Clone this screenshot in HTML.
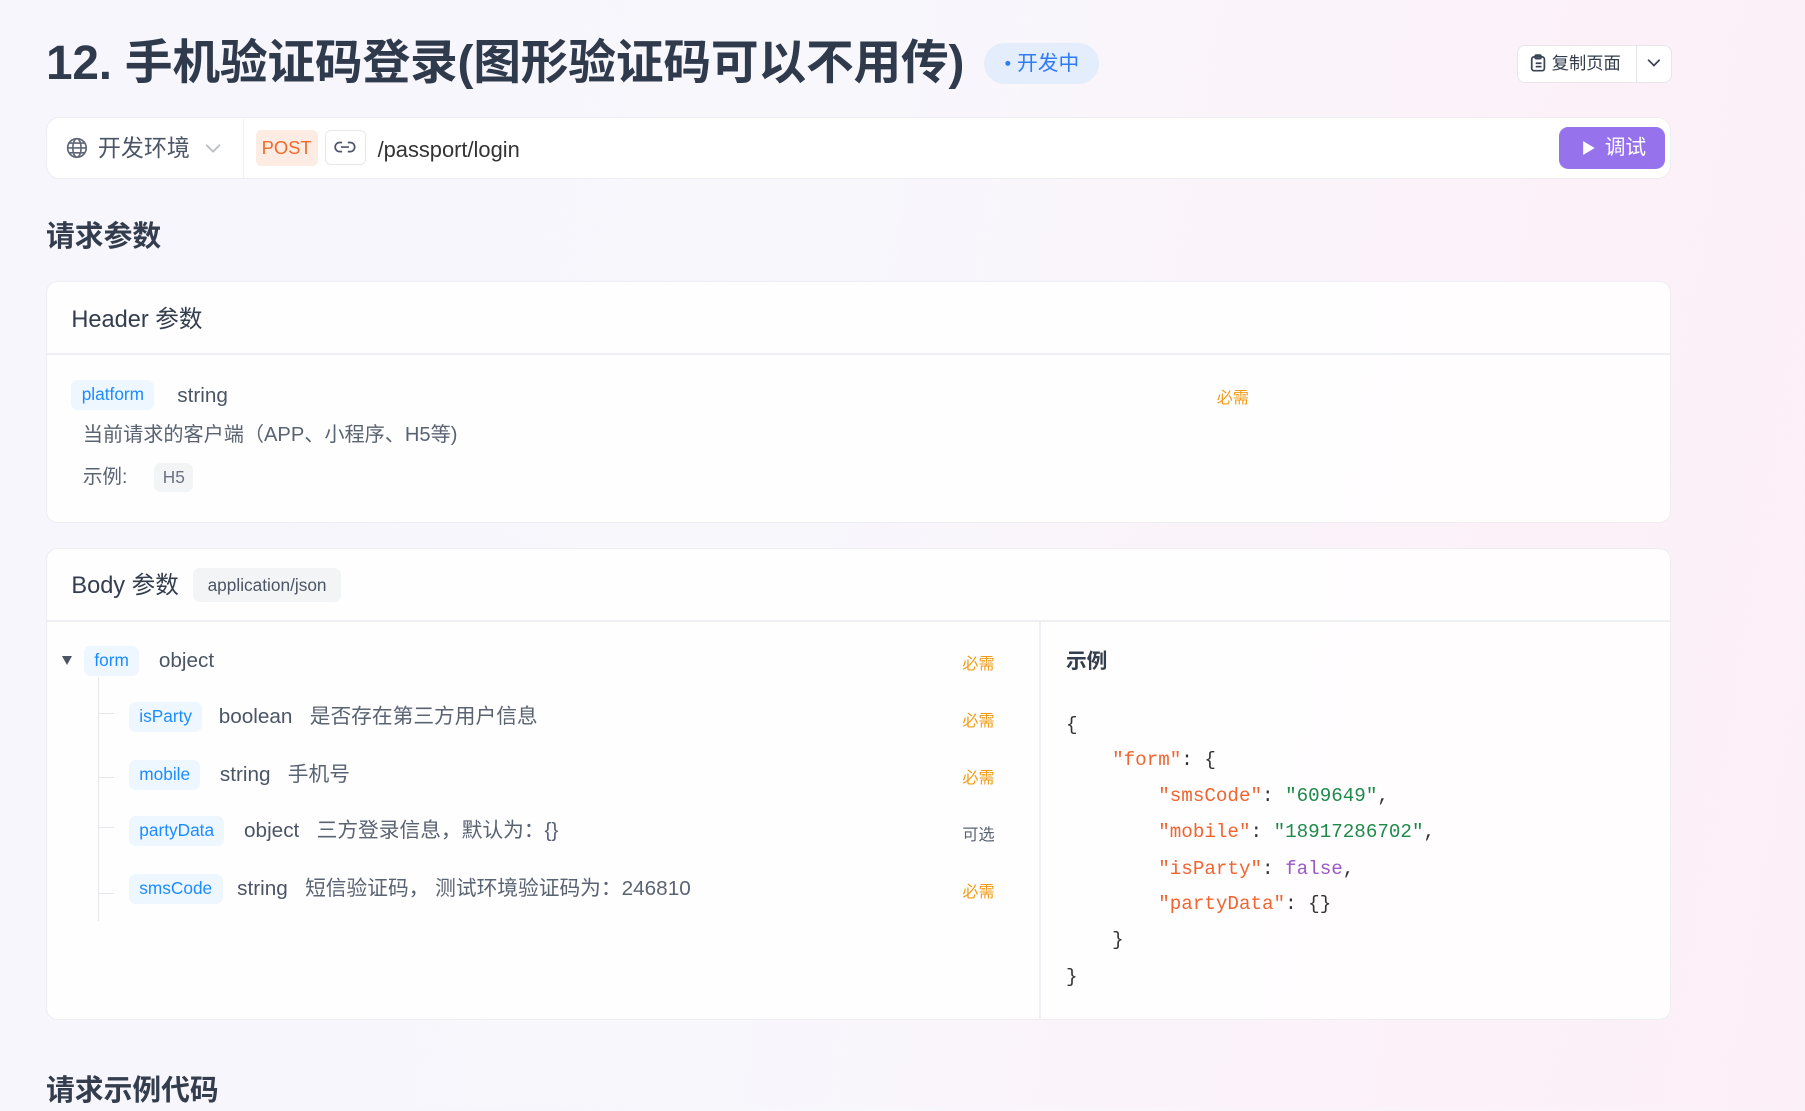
<!DOCTYPE html>
<html><head><meta charset="utf-8"><style>
html{zoom:1.15115}
body{margin:0;width:1568px;height:961px;overflow:hidden;font-family:"Liberation Sans","Noto Sans CJK SC",sans-serif;color:#333d4d;
background:linear-gradient(100deg,#f6f6fc 0%,#f8f7fc 45%,#fcf1f9 80%,#fdeff8 100%);position:relative}
.a{position:absolute}
.t{white-space:nowrap}
.card{position:absolute;left:40px;width:1410px;background:rgba(255,255,255,.85);border:1px solid #eceef2;border-radius:10px}
.tag{position:absolute;background:#eef6ff;color:#1b8cff;border-radius:6px;font-size:15px;line-height:26px;padding:0 9px;white-space:nowrap}
.req{position:absolute;color:#f39b14;font-size:14px;white-space:nowrap}
.code{font-family:"Liberation Mono","DejaVu Sans Mono",monospace;font-size:16.7px;color:#333;white-space:pre;position:absolute;left:926px}
.k{color:#f0642f}.s{color:#1d8a4a}.b{color:#9b59c6}
.d{font-size:18px;color:#5a6372}
</style></head><body>
<div class="a t" style="left:40px;top:28px;font-size:41.5px;font-weight:bold;color:#2f3a4c;line-height:56px;letter-spacing:-0.2px">12. 手机验证码登录(图形验证码可以不用传)</div>
<div class="a t" style="left:855px;top:37px;width:100px;height:36px;border-radius:18px;background:#e3edfc;color:#2f7bf5;font-size:18px;line-height:36px;text-align:center"><span style="font-size:10px;vertical-align:3px">●</span> 开发中</div>
<div class="a" style="left:1318px;top:39px;width:133px;height:31px;border:1px solid #e5e7eb;border-radius:7px;background:#fff"></div>
<div class="a" style="left:1421px;top:40px;width:1px;height:31px;background:#e5e7eb"></div>
<svg class="a" style="left:1329px;top:47px" width="14" height="16" viewBox="0 0 14 16" fill="none" stroke="#3a4454" stroke-width="1.5"><rect x="1.5" y="2.5" width="11" height="12" rx="2"/><rect x="4.5" y="1" width="5" height="3" rx="1"/><path d="M5 8h5M5 11h5"/></svg>
<div class="a t" style="left:1348px;top:44px;font-size:15px;color:#333d4d;line-height:22px">复制页面</div>
<svg class="a" style="left:1431px;top:50px" width="12" height="8" viewBox="0 0 12 8" fill="none" stroke="#3a4454" stroke-width="1.5"><path d="M1 1.5l5 5 5-5"/></svg>

<div class="a" style="left:40px;top:102px;width:1410px;height:52px;background:#fff;border:1px solid #eceef2;border-radius:12px"></div>
<div class="a" style="left:211px;top:103px;width:1px;height:52px;background:#eceef2"></div>
<svg class="a" style="left:57px;top:119px" width="19" height="19" viewBox="0 0 20 20" fill="none" stroke="#5f6878" stroke-width="1.5"><circle cx="10" cy="10" r="8.5"/><ellipse cx="10" cy="10" rx="3.8" ry="8.5"/><path d="M1.5 10h17M3 5.5h14M3 14.5h14"/></svg>
<div class="a t" style="left:85px;top:115px;font-size:20px;color:#4b5565;line-height:28px">开发环境</div>
<svg class="a" style="left:178px;top:124px" width="14" height="9" viewBox="0 0 14 9" fill="none" stroke="#b8bcc4" stroke-width="1.5"><path d="M1 1.5l6 6 6-6"/></svg>
<div class="a t" style="left:222px;top:113px;width:54px;height:31px;background:#fdece3;color:#f2692c;border-radius:5px;font-size:16px;line-height:31px;text-align:center">POST</div>
<div class="a" style="left:282px;top:113px;width:34px;height:29px;border:1px solid #e5e7eb;border-radius:5px;background:#fff"></div>
<svg class="a" style="left:290px;top:121px" width="19" height="14" viewBox="0 0 19 14" fill="none" stroke="#4b5565" stroke-width="1.5"><path d="M7 3H5a4 4 0 0 0 0 8h2M12 3h2a4 4 0 0 1 0 8h-2M6 7h7"/></svg>
<div class="a t" style="left:328px;top:116px;font-size:19px;color:#333;line-height:28px">/passport/login</div>
<div class="a" style="left:1354px;top:110px;width:92px;height:37px;background:#9672ec;border-radius:8px"></div>
<svg class="a" style="left:1374px;top:122px" width="12" height="14" viewBox="0 0 12 14"><path d="M1 1l10 6-10 6z" fill="#fff"/></svg>
<div class="a t" style="left:1394px;top:115px;font-size:18px;color:#fff;line-height:28px">调试</div>

<div class="a t" style="left:40px;top:189px;font-size:25px;font-weight:bold;color:#333d4d;line-height:34px">请求参数</div>

<div class="card" style="top:244px;height:209px"></div>
<div class="a" style="left:41px;top:307px;width:1410px;height:1px;background:#eef0f3"></div>
<div class="a t" style="left:62px;top:263px;font-size:20.5px;color:#333d4d;line-height:28px">Header 参数</div>
<div class="tag" style="left:62px;top:330px">platform</div>
<div class="a t" style="left:154px;top:331px;font-size:18px;color:#4b5565;line-height:26px">string</div>
<div class="req" style="left:1057px;top:334px">必需</div>
<div class="a t" style="left:72px;top:366px;font-size:17.5px;color:#5a6372;line-height:26px">当前请求的客户端（APP、小程序、H5等)</div>
<div class="a t" style="left:72px;top:402px;font-size:17px;color:#5a6372;line-height:26px">示例:</div>
<div class="a t" style="left:134px;top:402px;width:34px;height:25px;background:#f3f4f6;border-radius:6px;font-size:15px;color:#6b7280;line-height:25px;text-align:center">H5</div>

<div class="card" style="top:476px;height:408px"></div>
<div class="a" style="left:41px;top:539px;width:1410px;height:1px;background:#eef0f3"></div>
<div class="a" style="left:903px;top:540px;width:1px;height:345px;background:#eef0f3"></div>
<div class="a t" style="left:62px;top:494px;font-size:20.5px;color:#333d4d;line-height:28px">Body 参数</div>
<div class="a t" style="left:168px;top:493px;width:128px;height:30px;background:#f3f4f6;border-radius:6px;font-size:15px;color:#4b5565;line-height:30px;text-align:center">application/json</div>

<div class="a" style="left:54px;top:570px;width:0;height:0;border-left:5px solid transparent;border-right:5px solid transparent;border-top:8px solid #4b5565"></div>
<div class="tag" style="left:73px;top:561px">form</div>
<div class="a t" style="left:138px;top:561px;font-size:18px;color:#4b5565;line-height:26px">object</div>
<div class="req" style="left:836px;top:565px">必需</div>
<div class="a" style="left:85px;top:589px;width:1px;height:211px;background:#e5e7eb"></div>
<div class="a" style="left:85px;top:718px;width:14px;height:1px;background:#e5e7eb"></div>
<div class="a" style="left:85px;top:619px;width:14px;height:1px;background:#e5e7eb"></div>
<div class="a" style="left:85px;top:675px;width:14px;height:1px;background:#e5e7eb"></div>
<div class="a" style="left:85px;top:776px;width:14px;height:1px;background:#e5e7eb"></div>

<div class="tag" style="left:112px;top:610px">isParty</div>
<div class="a t" style="left:190px;top:610px;font-size:18px;color:#4b5565;line-height:26px">boolean&nbsp;&nbsp; <span class="d">是否存在第三方用户信息</span></div>
<div class="req" style="left:836px;top:614px">必需</div>
<div class="tag" style="left:112px;top:660px">mobile</div>
<div class="a t" style="left:191px;top:660px;font-size:18px;color:#4b5565;line-height:26px">string&nbsp;&nbsp; <span class="d">手机号</span></div>
<div class="req" style="left:836px;top:664px">必需</div>
<div class="tag" style="left:112px;top:709px">partyData</div>
<div class="a t" style="left:212px;top:709px;font-size:18px;color:#4b5565;line-height:26px">object&nbsp;&nbsp; <span class="d">三方登录信息，默认为：{}</span></div>
<div class="req" style="left:836px;top:713px;color:#5a6372">可选</div>
<div class="tag" style="left:112px;top:759px">smsCode</div>
<div class="a t" style="left:206px;top:759px;font-size:18px;color:#4b5565;line-height:26px">string&nbsp;&nbsp; <span class="d">短信验证码， 测试环境验证码为：246810</span></div>
<div class="req" style="left:836px;top:763px">必需</div>

<div class="a t" style="left:926px;top:562px;font-size:18px;font-weight:bold;color:#333d4d;line-height:26px">示例</div>
<div class="code" style="top:620px">{</div>
<div class="code" style="top:651px">    <span class="k">"form"</span>: {</div>
<div class="code" style="top:682px">        <span class="k">"smsCode"</span>: <span class="s">"609649"</span>,</div>
<div class="code" style="top:713px">        <span class="k">"mobile"</span>: <span class="s">"18917286702"</span>,</div>
<div class="code" style="top:745px">        <span class="k">"isParty"</span>: <span class="b">false</span>,</div>
<div class="code" style="top:776px">        <span class="k">"partyData"</span>: {}</div>
<div class="code" style="top:807px">    }</div>
<div class="code" style="top:839px">}</div>

<div class="a t" style="left:40px;top:931px;font-size:25px;font-weight:bold;color:#333d4d;line-height:34px">请求示例代码</div>
</body></html>
